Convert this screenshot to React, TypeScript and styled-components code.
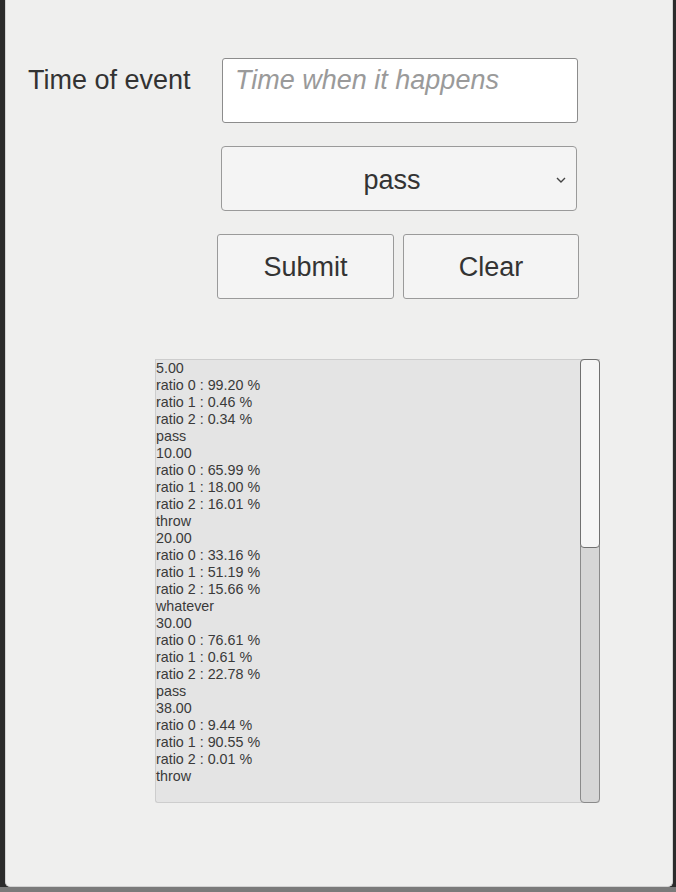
import React from 'react';
import styled, { createGlobalStyle } from 'styled-components';

const GlobalStyle = createGlobalStyle`
  html, body {
    margin: 0;
    padding: 0;
    background: #2b2b2b;
  }
  body {
    font-family: 'Liberation Sans', Arial, sans-serif;
  }
`;

const Frame = styled.div`
  width: 676px;
  height: 892px;
  display: flex;
  flex-direction: column;
  background: #2b2b2b;
`;

const Middle = styled.div`
  flex: 1;
  display: flex;
  padding: 0 3px 0 5px;
`;

const Panel = styled.div`
  flex: 1;
  background: #efefee;
  border: 1px solid #d2d2d2;
  border-top: none;
  border-radius: 0 0 5px 5px;
  padding-top: 58px;
  box-sizing: border-box;
`;

const BottomBar = styled.div`
  height: 5px;
  background: #7a7a7a;
`;

const Form = styled.div`
  display: grid;
  grid-template-columns: 211px 362px;
  row-gap: 23px;
`;

const Label = styled.div`
  padding: 6px 0 0 22px;
  font-size: 27px;
  line-height: 32px;
  color: #333;
`;

const TextInput = styled.input`
  margin-left: 5px;
  width: 356px;
  height: 65px;
  box-sizing: border-box;
  padding: 5px 12px 26px;
  border: 1px solid #8c8c8c;
  border-radius: 3px;
  background: #fff;
  font-family: 'Liberation Sans', Arial, sans-serif;
  font-size: 27px;
  line-height: 32px;
  color: #333;
  outline: none;

  &::placeholder {
    color: #9a9a9a;
    font-style: italic;
  }
`;

const SelectBox = styled.div`
  grid-column: 2;
  margin-left: 4px;
  width: 356px;
  height: 65px;
  box-sizing: border-box;
  border: 1px solid #9a9a9a;
  border-radius: 4px;
  background: #f4f4f4;
  display: flex;
  align-items: center;
  font-size: 27px;
  color: #333;
`;

const SelectValue = styled.span`
  flex: 1;
  text-align: center;
  padding: 3px 0 0 6px;
`;

const Chevron = styled.svg`
  margin: 2px 10px 0 0;
`;

const ButtonRow = styled.div`
  grid-column: 2;
  display: flex;
  gap: 9px;
`;

const Button = styled.button<{ $w: number }>`
  width: ${(p) => p.$w}px;
  height: 65px;
  box-sizing: border-box;
  border: 1px solid #9a9a9a;
  border-radius: 3px;
  background: #f4f4f4;
  font-family: 'Liberation Sans', Arial, sans-serif;
  font-size: 27px;
  color: #333;
  padding: 2px 0 0;
`;

const LogBox = styled.div`
  margin: 60px 0 0 149px;
  width: 445px;
  height: 444px;
  box-sizing: border-box;
  border: 1px solid #cdcdcd;
  border-right: none;
  border-radius: 0 0 3px 3px;
  background: #e4e4e4;
  display: flex;
`;

const LogText = styled.div`
  flex: 1;
  font-size: 14.3px;
  line-height: 17px;
  color: #3a3a3a;
`;

const Scrollbar = styled.div`
  width: 20px;
  margin-top: -1px;
  margin-bottom: -1px;
  box-sizing: border-box;
  border: 1px solid #8a8a8a;
  border-radius: 4px;
  background: #d6d6d6;
  display: flex;
  flex-direction: column;
`;

const Thumb = styled.div`
  height: 189px;
  margin: -1px;
  box-sizing: border-box;
  border: 1px solid #707070;
  border-radius: 4px;
  background: #f5f5f5;
`;

const lines = [
  '5.00',
  'ratio 0 : 99.20 %',
  'ratio 1 : 0.46 %',
  'ratio 2 : 0.34 %',
  'pass',
  '10.00',
  'ratio 0 : 65.99 %',
  'ratio 1 : 18.00 %',
  'ratio 2 : 16.01 %',
  'throw',
  '20.00',
  'ratio 0 : 33.16 %',
  'ratio 1 : 51.19 %',
  'ratio 2 : 15.66 %',
  'whatever',
  '30.00',
  'ratio 0 : 76.61 %',
  'ratio 1 : 0.61 %',
  'ratio 2 : 22.78 %',
  'pass',
  '38.00',
  'ratio 0 : 9.44 %',
  'ratio 1 : 90.55 %',
  'ratio 2 : 0.01 %',
  'throw',
];

const App = () => {
  return (
    <>
      <GlobalStyle />
      <Frame>
        <Middle>
          <Panel>
            <Form>
              <Label>Time of event</Label>
              <TextInput placeholder='Time when it happens' />
              <SelectBox>
                <SelectValue>pass</SelectValue>
                <Chevron width='10' height='6' viewBox='0 0 10 6'>
                  <polyline points='1,1 5,5 9,1' fill='none' stroke='#444' strokeWidth='1.4' />
                </Chevron>
              </SelectBox>
              <ButtonRow>
                <Button $w={177}>Submit</Button>
                <Button $w={176}>Clear</Button>
              </ButtonRow>
            </Form>
            <LogBox>
              <LogText>
                {lines.map((l, i) => (
                  <div key={i}>{l}</div>
                ))}
              </LogText>
              <Scrollbar>
                <Thumb />
              </Scrollbar>
            </LogBox>
          </Panel>
        </Middle>
        <BottomBar />
      </Frame>
    </>
  );
};

export default App;
